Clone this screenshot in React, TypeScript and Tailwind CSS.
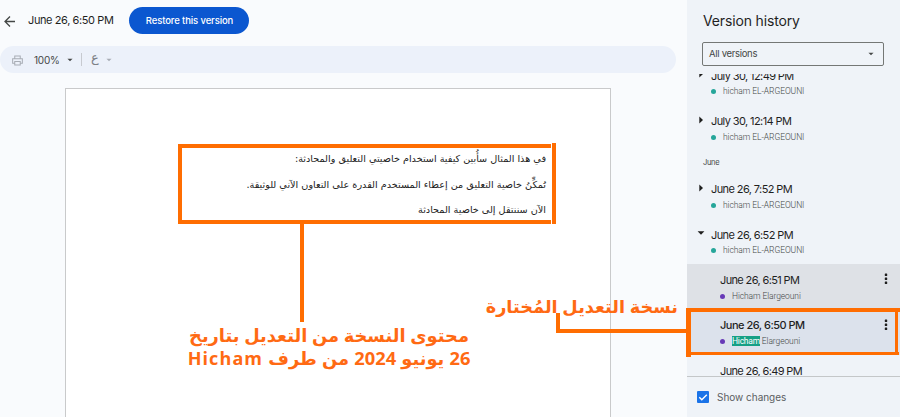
import React from "react";

function Caret({ dir, className = "" }: { dir: "right" | "down"; className?: string }) {
  return (
    <svg viewBox="0 0 8 8" className={`shrink-0 ${className}`} fill="currentColor">
      {dir === "right" ? <path d="M2.3 .6 6 4 2.3 7.4Z" /> : <path d="M.6 2.2h6.8L4 5.8Z" />}
    </svg>
  );
}

function Dots() {
  return (
    <svg viewBox="0 0 4 12" className="mt-[9px] mr-[12px] ml-auto h-3 w-1 shrink-0" fill="#1f1f1f">
      <rect x=".8" y=".6" width="2.4" height="2.4" rx=".5" />
      <rect x=".8" y="4.6" width="2.4" height="2.4" rx=".5" />
      <rect x=".8" y="8.6" width="2.4" height="2.4" rx=".5" />
    </svg>
  );
}

function Version({ time, open }: { time: string; open?: boolean }) {
  return (
    <div className="flex h-[45.3px] shrink-0 pl-[10px]">
      <Caret dir={open ? "down" : "right"} className="mt-[10px] h-2 w-2 text-[#1f1f1f]" />
      <div className="ml-[6px]">
        <div className="mt-[7.5px] h-[16px] text-[11px] leading-[16px] tracking-[-0.6px] whitespace-nowrap text-[#1f1f1f]">{time}</div>
        <div className="flex h-[16px] items-center font-['Roboto',sans-serif] text-[8.5px] font-light tracking-[-0.07px] whitespace-nowrap text-[#444746]">
          <span className="mr-[7px] h-[5px] w-[5px] rounded-full bg-[#26a69a]" />
          hicham EL-ARGEOUNI
        </div>
      </div>
    </div>
  );
}

function SubVersion({ time, selected, shade, author = true }: { time: string; selected?: boolean; shade: string; author?: boolean }) {
  return (
    <div className={`flex h-[45.3px] shrink-0 pl-[33px] ${shade}`}>
      <div>
        <div className={`mt-[7.7px] h-[16px] text-[11px] leading-[16px] whitespace-nowrap text-[#1f1f1f] ${selected ? "font-medium tracking-[-0.5px]" : "tracking-[-0.64px]"}`}>{time}</div>
        {author && (
          <div className="flex h-[16px] items-center font-['Roboto',sans-serif] text-[8.5px] font-light tracking-[-0.1px] whitespace-nowrap text-[#444746]">
            <span className="mr-[7px] h-[5px] w-[5px] rounded-full bg-[#673ab7]" />
            {selected ? <span className="mr-[2px] bg-[#16a085] leading-[10px] tracking-[-0.25px] font-normal text-white">Hicham</span> : <span className="mr-[2px]">Hicham</span>}
            Elargeouni
          </div>
        )}
      </div>
      {author && <Dots />}
    </div>
  );
}

export default function App() {
  return (
    <div className="relative flex h-[417px] w-[900px] overflow-hidden bg-[#f9fbfd] font-['Inter',sans-serif]">
      <main className="flex w-[687px] shrink-0 flex-col">
        <header className="flex h-[46px] shrink-0 items-start">
          <svg viewBox="0 0 12 12" className="mt-[15px] ml-[4px] h-3 w-3" fill="none" stroke="#444746" strokeWidth="1.3">
            <path d="M11 6.5H1.3M6 1.5 1 6.5l5 5" />
          </svg>
          <span className="mt-[12px] ml-[12px] w-[86px] text-[11px] leading-[16px] tracking-[-0.4px] whitespace-nowrap text-[#1f1f1f]">June 26, 6:50 PM</span>
          <button className="mt-[7px] ml-[15px] h-[27px] w-[120px] rounded-full bg-[#0b57d0] pt-px pl-px text-[9.5px] font-medium tracking-[-0.12px] whitespace-nowrap text-white">Restore this version</button>
        </header>
        <div className="flex h-[27px] w-[676px] shrink-0 items-center rounded-full bg-[#ecf1fa] pl-[12px] text-[#444746]">
          <svg viewBox="0 0 12 12" className="mt-px h-[11px] w-[11px]" fill="none" stroke="#a8adb5" strokeWidth="1.1">
            <path d="M3 4V1h6v3M3 9H.7V4.2h10.6V9H9M3 7h6v4H3z" />
          </svg>
          <span className="mt-px ml-[11px] w-[33px] text-[10px] tracking-[-0.25px]">100%</span>
          <Caret dir="down" className="mt-px h-[6px] w-[6px]" />
          <span className="ml-[8px] h-[13px] w-px bg-[#c7cad0]" />
          <span className="-mt-[4px] ml-[9px] w-[15px] font-['DejaVu_Sans',sans-serif] text-[13px] leading-[12px] text-[#7d8187]">ع</span>
          <Caret dir="down" className="mt-px h-[6px] w-[6px] text-[#a8adb5]" />
        </div>
        <article dir="rtl" className="mt-[15px] ml-[65px] w-[546px] grow border border-b-0 border-[#c9cacb] bg-white pt-[57px] pr-[64px] font-['DejaVu_Sans',sans-serif] text-[9.67px] leading-[25.6px] whitespace-nowrap text-[#222]">
          <p>في هذا المثال سأُبين كيفية استخدام خاصيتي التعليق والمحادثة:</p>
          <p>تُمكِّنُ خاصية التعليق من إعطاء المستخدم القدرة على التعاون الآني للوثيقة.</p>
          <p>الآن سننتقل إلى خاصية المحادثة</p>
        </article>
      </main>

      <aside className="flex w-[213px] shrink-0 flex-col bg-[#eff3f8]">
        <h1 className="mt-[11px] ml-[16px] h-[20px] text-[14px] leading-[20px] tracking-[-0.15px] text-[#1f1f1f]">Version history</h1>
        <div className="mt-[11px] ml-[15px] flex h-[24px] w-[182px] shrink-0 items-center justify-between rounded-[2px] border border-[#747775] pr-[9px] pl-[6px] text-[9.5px] tracking-[-0.3px] text-[#444746]">
          All versions
          <Caret dir="down" className="h-[6px] w-[6px]" />
        </div>
        <div className="mt-[8px] flex h-[303px] shrink-0 flex-col overflow-hidden border-b border-[#c4c7c9]">
          <div className="-mt-[13.8px] shrink-0"><Version time="July 30, 12:49 PM" /></div>
          <Version time="July 30, 12:14 PM" />
          <div className="h-[23px] shrink-0 pt-[6px] pl-[16px] text-[7.5px] leading-[12px] tracking-[-0.3px] text-[#444746]">June</div>
          <Version time="June 26, 7:52 PM" />
          <Version time="June 26, 6:52 PM" open />
          <SubVersion time="June 26, 6:51 PM" shade="bg-[#dee1e6]" />
          <SubVersion time="June 26, 6:50 PM" shade="bg-[#dce2ec]" selected />
          <SubVersion time="June 26, 6:49 PM" shade="" author={false} />
        </div>
        <label className="flex h-[40px] items-center pl-[10px] text-[10px] tracking-[-0.02px] text-[#5b5e62]">
          <svg viewBox="0 0 12 12" className="mr-[8px] h-3 w-3">
            <rect width="12" height="12" rx="1" fill="#1a73e8" />
            <path d="m2.3 6.2 2.5 2.5 5-5" fill="none" stroke="#fff" strokeWidth="1.4" />
          </svg>
          Show changes
        </label>
      </aside>

      <div className="absolute top-[144px] left-[178px] h-[80px] w-[373px] border-4 border-r-0 border-[#ff6d01]" />
      <div className="absolute top-[143px] left-[552px] h-[81px] w-[4px] bg-[#ff6d01]" />
      <div className="absolute top-[224px] left-[300px] h-[98px] w-[4px] bg-[#ff6d01]" />
      <div dir="rtl" className="absolute top-[324px] left-[179px] w-[300px] text-center font-['Open_Sans','DejaVu_Sans',sans-serif] text-[17.85px] leading-[23px] font-bold whitespace-nowrap text-[#ff6a13]">
        <div>محتوى النسخة من التعديل بتاريخ</div>
        <div className="[word-spacing:0.5px]">
          <span className="text-[18.3px] leading-[20px] tracking-[1.8px]">26</span> يونيو <span className="text-[18.3px] leading-[20px] tracking-[1.8px]">2024</span> من طرف <span className="text-[18px] leading-[20px] tracking-[1.1px]">Hicham</span>
        </div>
      </div>
      <div dir="rtl" className="absolute top-[295px] left-[478px] w-[200px] font-['Open_Sans','DejaVu_Sans',sans-serif] text-[17.75px] leading-[23px] font-bold whitespace-nowrap text-[#ff6a13]">نسخة التعديل المُختارة</div>
      <div className="absolute top-[313px] left-[556px] h-[20px] w-[131px] border-b-4 border-l-[4px] border-[#ff6d01]" />
      <div className="absolute top-[308px] left-[686px] h-[49px] w-[5px] bg-[#ff6d01]" />
      <div className="absolute top-[308px] left-[690px] h-[4px] w-[210px] bg-[#ff6d01]" />
      <div className="absolute top-[352px] left-[690px] h-[3px] w-[209px] bg-[#ff6d01]" />
      <div className="absolute top-[311px] left-[895px] h-[43px] w-[3px] bg-[#ff6d01]" />
    </div>
  );
}
